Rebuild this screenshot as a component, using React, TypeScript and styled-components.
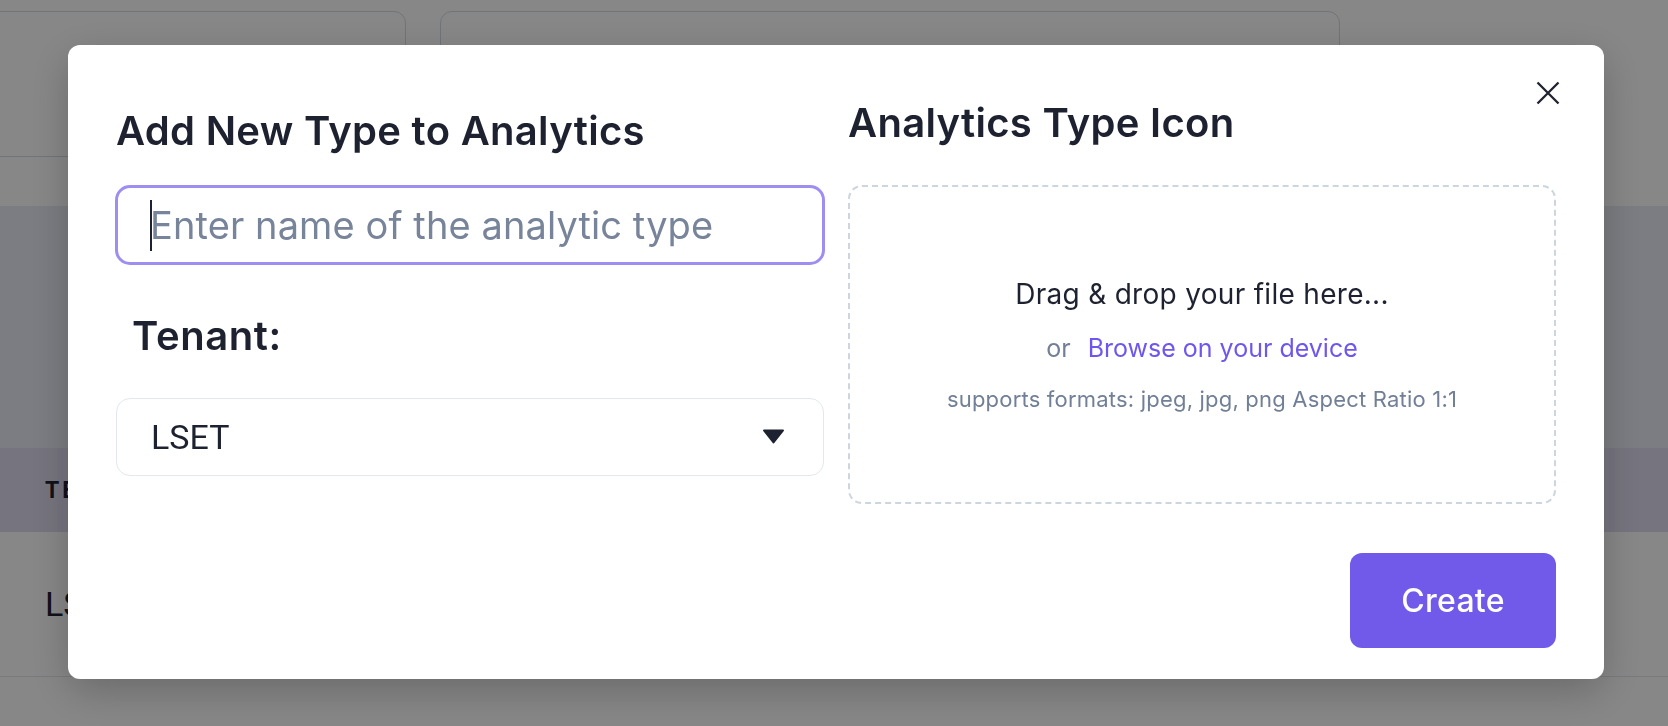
import React from "react";
import styled, { createGlobalStyle } from "styled-components";

const GlobalStyle = createGlobalStyle`
  html, body { margin: 0; padding: 0; }
  body {
    font-family: Inter, "Open Sans", sans-serif;
    background: #ffffff;
    overflow: hidden;
  }
  * { box-sizing: border-box; }
`;

/* ---------- background page ---------- */
const Page = styled.div`
  min-height: 726px;
  background: #ffffff;
  display: flex;
  flex-direction: column;
`;

const TopArea = styled.div`
  height: 206px;
  display: flex;
  align-items: flex-start;
  gap: 34px;
  padding-top: 11px;
`;

const StatCard = styled.div<{ $w: number; $h: number; $offset?: number }>`
  width: ${(p) => p.$w}px;
  height: ${(p) => p.$h}px;
  margin-left: ${(p) => p.$offset ?? 0}px;
  border: 1.5px solid #d3dbe8;
  border-radius: 12px;
  background: #ffffff;
`;

const Band = styled.div`
  height: 242px;
  background: #eaecf5;
`;

const TableHead = styled.div`
  height: 84px;
  background: #dfddf0;
  display: flex;
  align-items: center;
  padding-left: 45px;
  font: 700 23px Roboto, sans-serif;
  letter-spacing: 3px;
  color: #1f2330;
`;

const TableRow = styled.div`
  height: 145px;
  border-bottom: 1px solid #e5e7eb;
  display: flex;
  align-items: center;
  padding-left: 45px;
  font: 400 34px Roboto, sans-serif;
  color: #1f2330;
`;

/* ---------- modal ---------- */
const Overlay = styled.div`
  position: fixed;
  inset: 0;
  background: rgba(0, 0, 0, 0.47);
  display: flex;
  align-items: center;
  justify-content: center;
`;

const Modal = styled.div`
  position: relative;
  width: 1536px;
  margin: -3px 0 0 4px;
  background: #ffffff;
  border-radius: 12px;
  padding: 54px 48px 31px;
  box-shadow: 0 12px 40px rgba(0, 0, 0, 0.22);
`;

const CloseButton = styled.button`
  position: absolute;
  top: 36px;
  right: 44px;
  width: 24px;
  height: 24px;
  padding: 0;
  border: none;
  background: none;
  cursor: pointer;
  display: flex;
`;

const Columns = styled.div`
  display: grid;
  grid-template-columns: 1fr 1fr;
  column-gap: 24px;
  align-items: start;
`;

const Column = styled.div`
  display: flex;
  flex-direction: column;
`;

const Title = styled.h2<{ $offset: number }>`
  margin: ${(p) => p.$offset}px 0 0;
  font: 600 40px/48px Inter, sans-serif;
  letter-spacing: 0.3px;
  color: #1d2130;
`;

const InputWrap = styled.div`
  position: relative;
  margin-top: 31px;

  &::before {
    content: "";
    position: absolute;
    left: 34px;
    top: 14px;
    width: 1.5px;
    height: 51px;
    background: #1d2130;
  }
`;

const TextInput = styled.input`
  width: 100%;
  height: 78px;
  padding: 0 32px;
  border: 2px solid #9f8ef2;
  border-radius: 14px;
  box-shadow: 0 0 0 1px #9f8ef2;
  outline: none;
  font: 400 38px Inter, sans-serif;
  letter-spacing: 0.1px;
  color: #1d2130;
  background: #ffffff;

  &::placeholder {
    color: #77849a;
  }
`;

const FieldLabel = styled.div`
  margin: 48px 0 0 16px;
  font: 600 40px/48px Inter, sans-serif;
  letter-spacing: 0.6px;
  color: #1d2130;
`;

const SelectBox = styled.button`
  margin-top: 38px;
  width: 100%;
  height: 78px;
  padding: 0 38px 0 34px;
  display: flex;
  align-items: center;
  justify-content: space-between;
  border: 1.5px solid #e2e8f0;
  border-radius: 14px;
  background: #ffffff;
  font: 400 34px Roboto, sans-serif;
  color: #1d2130;
  cursor: pointer;
`;

const DropZone = styled.div`
  margin-top: 38px;
  height: 319px;
  border: 2px dashed #cdd5df;
  border-radius: 14px;
  display: flex;
  flex-direction: column;
  align-items: center;
  justify-content: center;
  text-align: center;
`;

const DropTitle = styled.div`
  font: 400 28px/40px Inter, sans-serif;
  letter-spacing: 0.3px;
  color: #1d2130;
`;

const BrowseLine = styled.div`
  margin-top: 16px;
  font: 400 25px/36px Inter, sans-serif;
  color: #718096;
  display: flex;
  gap: 17px;
`;

const BrowseLink = styled.span`
  color: #6d57ee;
  cursor: pointer;
`;

const Hint = styled.div`
  margin-top: 17px;
  font: 400 22px/32px Inter, sans-serif;
  letter-spacing: 0.2px;
  color: #718096;
`;

const Footer = styled.div`
  display: flex;
  justify-content: flex-end;
  margin-top: 49px;
`;

const CreateButton = styled.button`
  width: 206px;
  height: 95px;
  border: none;
  border-radius: 12px;
  background: #7159ea;
  color: #ffffff;
  font: 500 32px Inter, sans-serif;
  letter-spacing: 0.3px;
  cursor: pointer;
`;

const CloseIcon = () => (
  <svg width="24" height="24" viewBox="0 0 24 24" fill="none">
    <path d="M1.5 1.5 22.5 22.5M22.5 1.5 1.5 22.5" stroke="#1f2330" strokeWidth="2.3" />
  </svg>
);

const CaretDown = () => (
  <svg width="23" height="15" viewBox="0 0 23 15">
    <path d="M2 1.5h19L11.5 13.5z" fill="#1d2130" stroke="#1d2130" strokeWidth="2" strokeLinejoin="round" />
  </svg>
);

export default function App() {
  return (
    <>
      <GlobalStyle />
      <Page>
        <TopArea>
          <StatCard $w={426} $h={146} $offset={-20} />
          <StatCard $w={900} $h={190} />
        </TopArea>
        <Band />
        <TableHead>TENANT</TableHead>
        <TableRow>LSET</TableRow>
      </Page>

      <Overlay>
        <Modal>
          <CloseButton aria-label="Close">
            <CloseIcon />
          </CloseButton>
          <Columns>
            <Column>
              <Title $offset={8}>Add New Type to Analytics</Title>
              <InputWrap>
                <TextInput placeholder="Enter name of the analytic type" />
              </InputWrap>
              <FieldLabel>Tenant:</FieldLabel>
              <SelectBox>
                <span>LSET</span>
                <CaretDown />
              </SelectBox>
            </Column>
            <Column>
              <Title $offset={0}>Analytics Type Icon</Title>
              <DropZone>
                <DropTitle>Drag &amp; drop your file here...</DropTitle>
                <BrowseLine>
                  <span>or</span>
                  <BrowseLink>Browse on your device</BrowseLink>
                </BrowseLine>
                <Hint>supports formats: jpeg, jpg, png Aspect Ratio 1:1</Hint>
              </DropZone>
            </Column>
          </Columns>
          <Footer>
            <CreateButton>Create</CreateButton>
          </Footer>
        </Modal>
      </Overlay>
    </>
  );
}
